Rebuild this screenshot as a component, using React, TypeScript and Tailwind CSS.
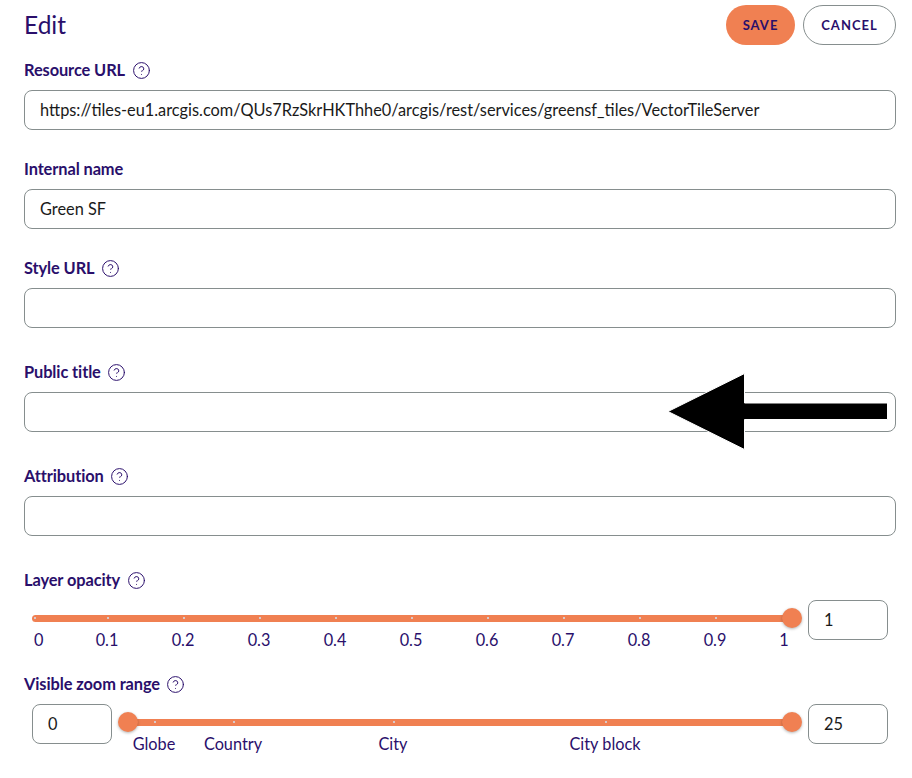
import { CircleHelp } from "lucide-react"

const opacityMarks = [
  { left: 3, label: "0", labelLeft: 2, labelClass: "" },
  { left: 76, label: "0.1", labelLeft: 75, labelClass: "-translate-x-1/2" },
  { left: 152, label: "0.2", labelLeft: 151, labelClass: "-translate-x-1/2" },
  { left: 228, label: "0.3", labelLeft: 227, labelClass: "-translate-x-1/2" },
  { left: 304, label: "0.4", labelLeft: 303, labelClass: "-translate-x-1/2" },
  { left: 380, label: "0.5", labelLeft: 379, labelClass: "-translate-x-1/2" },
  { left: 456, label: "0.6", labelLeft: 455, labelClass: "-translate-x-1/2" },
  { left: 532, label: "0.7", labelLeft: 531, labelClass: "-translate-x-1/2" },
  { left: 608, label: "0.8", labelLeft: 607, labelClass: "-translate-x-1/2" },
  { left: 684, label: "0.9", labelLeft: 683, labelClass: "-translate-x-1/2" },
  { left: -100, label: "1", labelLeft: 752, labelClass: "-translate-x-1/2" },
]

const zoomMarks = [
  { left: 27, label: "Globe" },
  { left: 106, label: "Country" },
  { left: 266, label: "City" },
  { left: 478, label: "City block" },
]

function FieldLabel({ text, help = true }: { text: string; help?: boolean }) {
  return (
    <div className="flex h-6 items-center gap-[6.5px] text-[16.4px] font-bold tracking-[-0.1px] text-[#2a0f6b]">
      <span>{text}</span>
      {help && <CircleHelp className="h-[19px] w-[19px]" strokeWidth={1.25} />}
    </div>
  )
}

function TextField({ value = "" }: { value?: string }) {
  return (
    <input
      readOnly
      value={value}
      className="mt-2 block h-10 w-full rounded-lg border border-[#868e8e] bg-white px-[15px] pb-0.5 text-[16.33px] text-[#1a1a1a] outline-none"
    />
  )
}

function NumberBox({ value }: { value: string }) {
  return (
    <input
      readOnly
      value={value}
      className="block h-10 w-20 shrink-0 rounded-lg border border-[#868e8e] bg-white px-[15px] pb-0.5 text-[16.33px] text-[#1a1a1a] outline-none"
    />
  )
}

function Thumb({ className }: { className: string }) {
  return <div className={`absolute top-[8px] h-5 w-5 -translate-x-1/2 rounded-full bg-[#f08052] shadow-[0_1px_3px_rgba(0,0,0,0.3)] ${className}`} />
}

export default function App() {
  return (
    <div className="relative h-[778px] w-[912px] overflow-hidden bg-white pl-6 pr-4 pt-[5px] font-['Lato',sans-serif]">
      <div className="flex h-10 items-center justify-between">
        <h1 className="text-[24.5px] font-normal text-[#2a0f6b]">Edit</h1>
        <div className="flex gap-2">
          <button className="h-10 w-[69px] rounded-full bg-[#f08052] pt-0.5 text-[13px] font-bold tracking-[1px] text-[#2a0f6b]">
            SAVE
          </button>
          <button className="h-10 w-[93px] rounded-full border border-[#868e8e] bg-white pt-0.5 text-[13px] font-bold tracking-[1px] text-[#2a0f6b]">
            CANCEL
          </button>
        </div>
      </div>

      <div className="mt-[13px]">
        <FieldLabel text="Resource URL" />
        <TextField value="https://tiles-eu1.arcgis.com/QUs7RzSkrHKThhe0/arcgis/rest/services/greensf_tiles/VectorTileServer" />
      </div>
      <div className="mt-[27px]">
        <FieldLabel text="Internal name" help={false} />
        <TextField value="Green SF" />
      </div>
      <div className="mt-[27px]">
        <FieldLabel text="Style URL" />
        <TextField />
      </div>
      <div className="mt-8">
        <FieldLabel text="Public title" />
        <TextField />
      </div>
      <div className="mt-8">
        <FieldLabel text="Attribution" />
        <TextField />
      </div>

      <div className="mt-8">
        <FieldLabel text="Layer opacity" />
        <div className="mt-2 flex gap-4 pl-2">
          <div className="relative h-10 w-[760px]">
            <div className="absolute inset-x-0 top-[15px] h-[7px] rounded-full bg-[#f08052]" />
            {opacityMarks.map((m) => (
              <div key={m.label}>
                {m.left >= 0 && (
                  <div className="absolute top-[17px] h-0.5 w-0.5 bg-[#d9c9c9]" style={{ left: m.left - 1 }} />
                )}
                <span className={`absolute top-[30px] text-[16.3px] leading-5 text-[#2a0f6b] ${m.labelClass}`} style={{ left: m.labelLeft }}>
                  {m.label}
                </span>
              </div>
            ))}
            <Thumb className="left-[760px]" />
          </div>
          <NumberBox value="1" />
        </div>
      </div>

      <div className="mt-8">
        <FieldLabel text="Visible zoom range" />
        <div className="mt-2 flex gap-4 pl-2">
          <NumberBox value="0" />
          <div className="relative h-10 w-[664px]">
            <div className="absolute inset-x-0 top-[15px] h-[7px] bg-[#f08052]" />
            {zoomMarks.map((m) => (
              <div key={m.label}>
                <div className="absolute top-[17px] h-0.5 w-0.5 bg-[#d9c9c9]" style={{ left: m.left - 1 }} />
                <span className="absolute top-[30px] -translate-x-1/2 whitespace-nowrap text-[16.3px] leading-5 text-[#2a0f6b]" style={{ left: m.left - 1 }}>
                  {m.label}
                </span>
              </div>
            ))}
            <Thumb className="left-0" />
            <Thumb className="left-[664px]" />
          </div>
          <NumberBox value="25" />
        </div>
      </div>

      <svg className="absolute left-[660px] top-[365px]" width="240" height="94" viewBox="660 365 240 94">
        <polygon points="668,411.5 744.5,373.5 744.5,403 887.5,403 887.5,419.5 744.5,419.5 744.5,449.5" fill="#000" stroke="#fff" strokeWidth="1" />
      </svg>
    </div>
  )
}
